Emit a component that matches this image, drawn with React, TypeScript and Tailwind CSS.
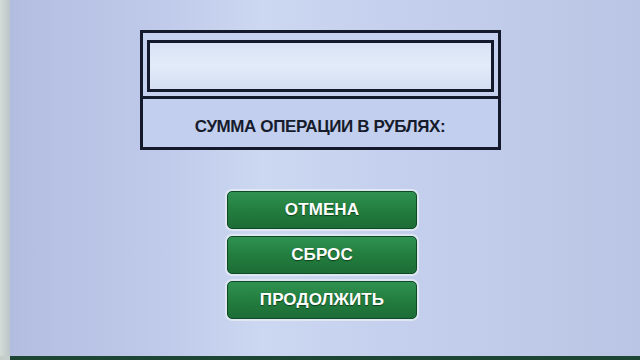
import React from 'react';

const buttons = ['ОТМЕНА', 'СБРОС', 'ПРОДОЛЖИТЬ'];

export default function App() {
  return (
    <div className="w-[640px] h-[360px] flex flex-col overflow-hidden font-['Liberation_Sans',_'Noto_Sans',_sans-serif]">
      <div className="flex flex-1 min-h-0">
        {/* left bezel */}
        <div className="w-[10px] bg-gradient-to-r from-[#d3dcd6] to-[#bcc6c8]" />

        {/* screen */}
        <div className="flex-1 flex flex-col items-center pr-[10px] pt-[30px] bg-[linear-gradient(90deg,#b2bde0_0%,#c0cbeb_25%,#ccd7f1_40%,#c5d0ee_60%,#c0cbea_80%,#bac4e4_100%)]">
          {/* amount box */}
          <div className="w-[361px] h-[120px] border-[3px] border-[#141a2b] flex flex-col">
            <div className="px-[4px] pt-[7px] pb-[4px] bg-[#c5d1ee]">
              <div className="h-[52px] border-[3px] border-[#141a2b] bg-[linear-gradient(180deg,#d9e3f5_0%,#e2ebf8_50%,#d4dff3_100%)]" />
            </div>
            <div className="h-[3px] bg-[#141a2b]" />
            <div className="flex-1 flex items-center justify-center pt-[8px] bg-[#c3cfee]">
              <span className="text-[17px] font-bold text-[#161c2c] tracking-[-0.4px]">
                СУММА ОПЕРАЦИИ В РУБЛЯХ:
              </span>
            </div>
          </div>

          {/* actions */}
          <div className="mt-[41px] ml-[4px] flex flex-col gap-[7px]">
            {buttons.map((label) => (
              <div
                key={label}
                className="w-[190px] h-[38px] rounded-[5px] ring-2 ring-[#e4ecf3]/80 border border-[#0f4a24] bg-[linear-gradient(180deg,#2f9252_0%,#24803f_45%,#1c6c36_100%)] flex items-center justify-center"
              >
                <span className="text-white font-bold text-[17px] tracking-[0.1px] [text-shadow:0_1px_1px_rgba(0,40,10,0.7)]">
                  {label}
                </span>
              </div>
            ))}
          </div>
        </div>
      </div>

      {/* bottom bezel */}
      <div className="h-[4px] flex">
        <div className="w-[10px] bg-[#c4cfcc]" />
        <div className="flex-1 bg-[#1d4533]" />
      </div>
    </div>
  );
}
